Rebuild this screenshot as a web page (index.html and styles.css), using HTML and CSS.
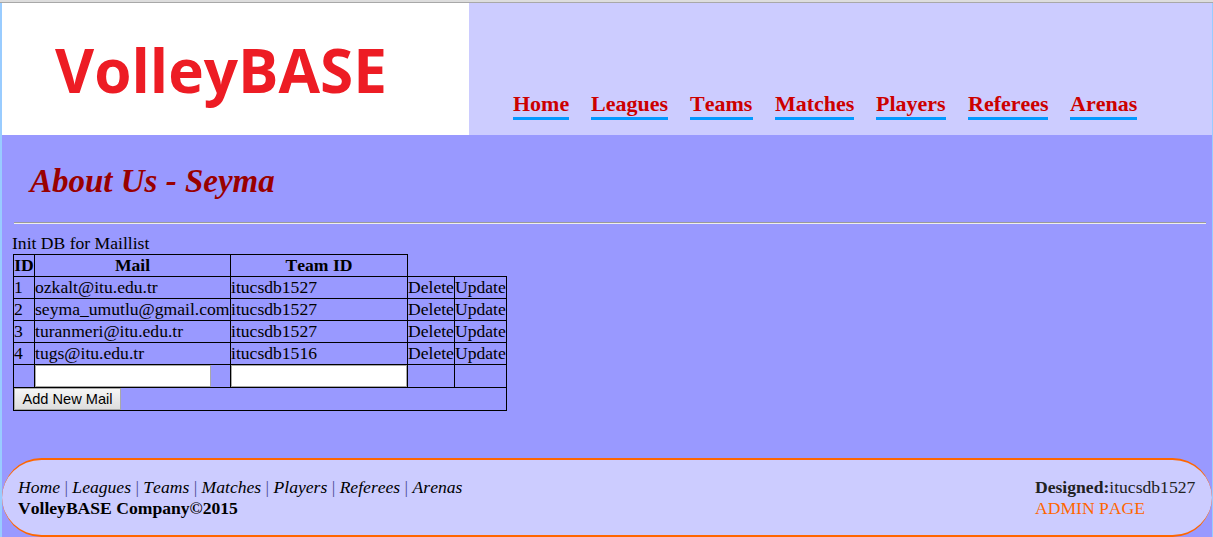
FILE: index.html
```html
<!DOCTYPE html>
<html lang="en">
<head>
<meta charset="utf-8">
<title>VolleyBASE</title>
<link rel="stylesheet" href="styles.css">
</head>
<body>
<div class="page">
  <header class="header">
    <div class="logo">
      <svg width="467" height="132" viewBox="0 0 467 132">
        <text class="logo-text" x="53" y="90" textLength="332" lengthAdjust="spacingAndGlyphs">VolleyBASE</text>
      </svg>
    </div>
    <nav class="nav">
      <a class="home">Home</a><a class="leagues">Leagues</a><a class="teams">Teams</a><a class="matches">Matches</a><a class="players">Players</a><a class="referees">Referees</a><a class="arenas">Arenas</a>
    </nav>
  </header>
  <main class="main">
    <h1 class="title">About Us - Seyma</h1>
    <hr class="rule">
    <div class="init">Init DB for Maillist</div>
    <table class="mails">
      <colgroup><col class="c-id"><col class="c-mail"><col class="c-team"><col class="c-del"><col class="c-upd"></colgroup>
      <tr><th>ID</th><th>Mail</th><th>Team ID</th></tr>
      <tr><td>1</td><td>ozkalt@itu.edu.tr</td><td>itucsdb1527</td><td>Delete</td><td>Update</td></tr>
      <tr><td>2</td><td>seyma_umutlu@gmail.com</td><td>itucsdb1527</td><td>Delete</td><td>Update</td></tr>
      <tr><td>3</td><td>turanmeri@itu.edu.tr</td><td>itucsdb1527</td><td>Delete</td><td>Update</td></tr>
      <tr><td>4</td><td>tugs@itu.edu.tr</td><td>itucsdb1516</td><td>Delete</td><td>Update</td></tr>
      <tr class="entry"><td></td><td><input class="field" type="text"></td><td><input class="field" type="text"></td><td></td><td></td></tr>
      <tr class="entry"><td colspan="5"><button class="add">Add New Mail</button></td></tr>
    </table>
  </main>
  <footer class="footer">
    <div class="links">
      <div class="menu"><i>Home</i> | <i>Leagues</i> | <i>Teams</i> | <i>Matches</i> | <i>Players</i> | <i>Referees</i> | <i>Arenas</i></div>
      <b class="company">VolleyBASE Company©2015</b>
    </div>
    <div class="credits">
      <div><b>Designed:</b>itucsdb1527</div>
      <a class="admin">ADMIN PAGE</a>
    </div>
  </footer>
</div>
</body>
</html>
```
FILE: styles.css
```css
* { box-sizing: border-box; }
body {
  margin: 0;
  height: 537px;
  overflow: hidden;
  background: #99ccff;
  border-top: 2px solid #dddddd;
  font: 17.6px/21px "Liberation Serif", serif;
  font-kerning: none;
  color: #000;
}
.page {
  height: 535px;
  border-top: 1px solid #a8a8a8;
  display: flex;
  flex-direction: column;
}
.header, .main, .footer { margin: 0 1px 0 2px; }
.header { height: 132px; display: flex; background: #ccccff; }
.logo { width: 467px; background: #fff; }
.logo svg { display: block; }
.logo-text { font: bold 61px "Open Sans", sans-serif; fill: #ed1c24; }
.nav {
  display: flex;
  gap: 22px;
  align-items: flex-start;
  padding: 88px 0 0 44px;
  font-size: 22px;
  font-weight: bold;
  line-height: 26px;
  color: #cc0000;
}
.nav a { height: 29px; border-bottom: 3px solid #0099ff; white-space: nowrap; }
.home { width: 56px; }
.leagues { width: 77px; }
.teams { width: 63px; }
.matches { width: 79px; }
.players { width: 70px; }
.referees { width: 80px; }
.arenas { width: 67px; }
.main { flex: 1; background: #9999ff; padding: 25px 5px 0 11px; }
.title {
  margin: 0 0 20px 17px;
  font: italic bold 33px/42px "Liberation Serif", serif;
  color: #990000;
}
.rule {
  height: 2px;
  margin: 0 1px 9px;
  border: 0;
  border-top: 1px solid #9a9a9a;
  border-bottom: 1px solid #eeeeee;
}
.init { height: 21px; margin-left: -1px; }
.mails { border-collapse: collapse; table-layout: fixed; width: 494px; }
.mails th, .mails td { height: 22px; padding: 0; border: 1px solid #000; white-space: nowrap; }
.c-id { width: 21px; }
.c-mail { width: 196px; }
.c-team { width: 177px; }
.c-del { width: 47px; }
.c-upd { width: 52px; }
.mails .entry td { height: 23px; line-height: 0; }
.field {
  display: block;
  width: 176px;
  height: 22px;
  margin: 0;
  padding: 0;
  background: #fff;
  border: 1px solid #a9a9a9;
}
.add {
  display: block;
  width: 107px;
  height: 22px;
  padding: 0;
  border: 1px solid #a9a9a9;
  background: linear-gradient(#f6f6f6, #dddddd);
  font: 14.6px/18px "Liberation Sans", sans-serif;
  color: #000;
}
.footer {
  height: 79px;
  margin-top: 0;
  display: flex;
  justify-content: space-between;
  padding: 17px 17px 0 16px;
  background: #ccccff;
  border: solid #ff6600;
  border-width: 2px 0;
  border-radius: 40px;
  box-shadow: 0 0 0 40px #9999ff;
  clip-path: inset(0);
}
.menu { color: #4d4d99; }
.menu i { color: #000; }
.company { display: block; }
.credits { width: 160px; color: #222; white-space: nowrap; }
.admin { color: #ff6600; }
```
